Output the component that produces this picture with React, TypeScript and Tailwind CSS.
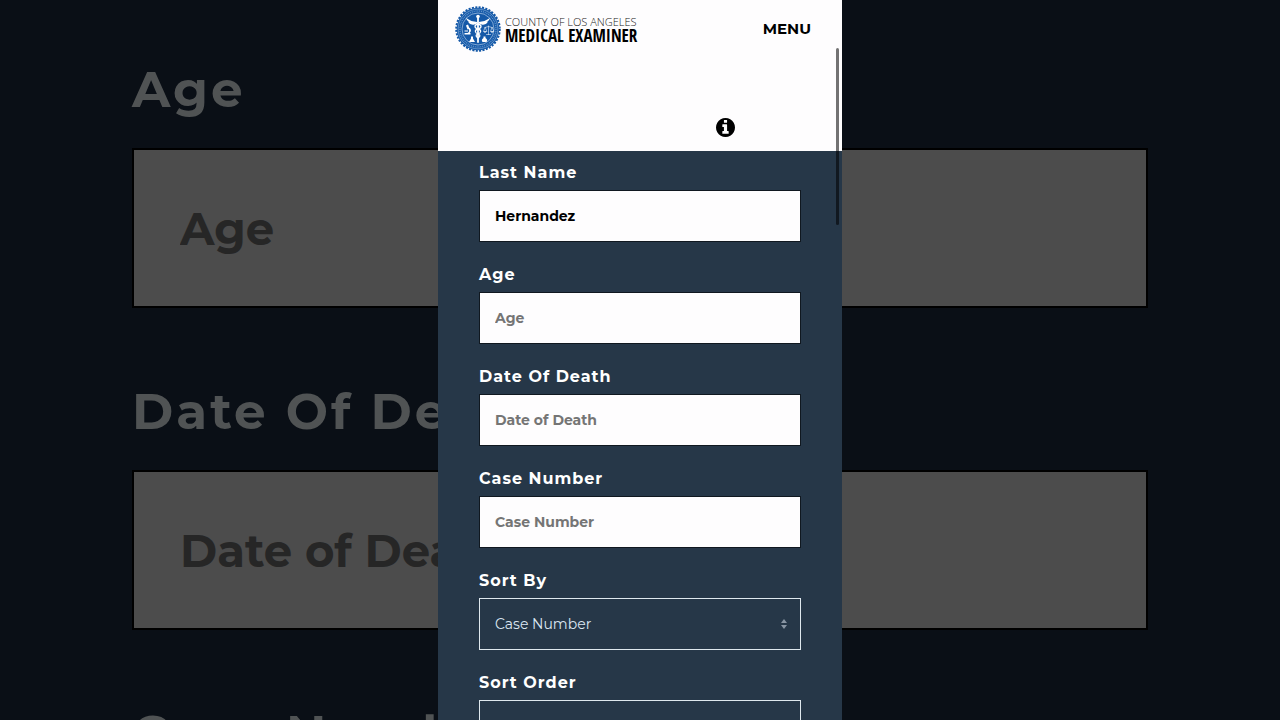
const backdropFields = [
  { id: "backdrop-age", label: "Age", placeholder: "Age" },
  { id: "backdrop-date", label: "Date Of Death", placeholder: "Date of Death" },
  { id: "backdrop-case", label: "Case Number", placeholder: "Case Number" },
];

const textFields = [
  { id: "last-name", label: "Last Name", placeholder: "Last Name", value: "Hernandez" },
  { id: "age", label: "Age", placeholder: "Age", value: "" },
  { id: "date-of-death", label: "Date Of Death", placeholder: "Date of Death", value: "" },
  { id: "case-number", label: "Case Number", placeholder: "Case Number", value: "" },
];

const selectFields = [
  { id: "sort-by", label: "Sort By", options: ["Case Number", "Last Name", "Date of Death"] },
  { id: "sort-order", label: "Sort Order", options: ["Ascending", "Descending"] },
];

function Seal() {
  return (
    <svg viewBox="0 0 92 92" className="size-[46px] shrink-0" aria-hidden="true">
      <circle cx="46" cy="46" r="42.5" fill="#1559a8" />
      <circle cx="46" cy="46" r="43.5" fill="none" stroke="#1559a8" strokeWidth="4" strokeDasharray="4.2 2.63" />
      <circle cx="46" cy="46" r="39.8" fill="none" stroke="#b9d2ee" strokeWidth="0.9" />
      <circle cx="46" cy="46" r="36" fill="none" stroke="#5f92cb" strokeWidth="2.8" strokeDasharray="2 1.8" />
      <circle cx="46" cy="46" r="32" fill="none" stroke="#c9dcf2" strokeWidth="1.2" />
      <g fill="none" stroke="#fff" strokeLinecap="round" strokeLinejoin="round">
        <path d="M46 23v49" strokeWidth="3.6" />
        <path
          d="M46 36c-8 2-8 8 0 10s6 8 0 10-4 6 0 8M46 36c8 2 8 8 0 10s-6 8 0 10 4 6 0 8"
          strokeWidth="2.6"
        />
        <path d="M67 40v17M60 43l7-2 7 2M60 43l-3 8h6zM74 43l-3 8h6zM63 57h8" strokeWidth="1.1" />
      </g>
      <g fill="#fff">
        <circle cx="46" cy="21" r="3.6" />
        <path d="M44 32c-7-1-15-2-22-9 1 5 4 8 7 9-1 0-2 0-3-1 2 4 5 6 8 6 4 1 7 0 10-2zM48 32c7-1 15-2 22-9-1 5-4 8-7 9 1 0 2 0 3-1-2 4-5 6-8 6-4 1-7 0-10-2z" />
        <path d="M57 51h6c-1 3-5 3-6 0zM71 51h6c-1 3-5 3-6 0z" />
        <path d="M22 39l4-2 3 8-4 2zM28 43c5 3 5 8 1 11h2v3H19v-3h6c4-2 4-5 2-8zM19 49h7v2h-7z" />
        <path d="M32 61h4v4l4 7H28l4-7zM57 61h4v3c4 2 4 6 2 8h-8c-2-2-2-6 2-8z" />
      </g>
    </svg>
  );
}

function InfoIcon() {
  return (
    <svg viewBox="128 128 1536 1536" className="size-[19px] fill-current" aria-hidden="true">
      <path d="M1152 1376v-160q0-14-9-23t-23-9h-96v-512q0-14-9-23t-23-9h-320q-14 0-23 9t-9 23v160q0 14 9 23t23 9h96v320h-96q-14 0-23 9t-9 23v160q0 14 9 23t23 9h448q14 0 23-9t9-23zm-128-896v-160q0-14-9-23t-23-9h-192q-14 0-23 9t-9 23v160q0 14 9 23t23 9h192q14 0 23-9t9-23zm640 416q0 209-103 385.5t-279.5 279.5-385.5 103-385.5-103-279.5-279.5-103-385.5 103-385.5 279.5-279.5 385.5-103 385.5 103 279.5 279.5 103 385.5z" />
    </svg>
  );
}

function Backdrop() {
  return (
    <div
      aria-hidden="true"
      className="absolute inset-0 flex flex-col gap-16 overflow-hidden px-[132px] pt-[50px]"
    >
      {backdropFields.map((field) => (
        <div key={field.id} className="flex shrink-0 flex-col gap-[18px]">
          <label htmlFor={field.id} className="text-[50px] leading-[80px] font-bold tracking-[3px] text-[#505354]">
            {field.label}
          </label>
          <input
            id={field.id}
            type="text"
            tabIndex={-1}
            placeholder={field.placeholder}
            className="h-[160px] w-full border-2 border-black bg-[#4c4c4c] px-[46px] text-[45px] font-bold placeholder:text-[#262626]"
          />
        </div>
      ))}
    </div>
  );
}

export default function App() {
  return (
    <div className="relative flex h-screen justify-center overflow-hidden bg-[#0a0f16] font-['Montserrat',sans-serif]">
      <Backdrop />
      <main className="relative flex w-full max-w-[404px] flex-col overflow-hidden bg-[#263748]">
        <header className="flex shrink-0 flex-col bg-[#fefdfe] pb-[14px]">
          <div className="flex h-[58px] items-center justify-between pr-[31px] pl-[17px]">
            <a href="#home" className="flex items-center gap-1">
              <Seal />
              <span className="flex flex-col whitespace-nowrap">
                <span className="font-['Open_Sans',sans-serif] text-[11px] leading-[13px] font-light text-[#222]">
                  COUNTY OF LOS ANGELES
                </span>
                <span className="font-['Open_Sans_Condensed','Noto_Sans_Condensed','Roboto_Condensed','Open_Sans',sans-serif] text-[17px] leading-[15px] font-bold text-black">
                  MEDICAL EXAMINER
                </span>
              </span>
            </a>
            <button type="button" className="text-[15px] font-bold text-black">
              MENU
            </button>
          </div>
          <div className="flex justify-end pt-[60px] pr-[107px]">
            <button type="button" aria-label="Search information" className="text-black">
              <InfoIcon />
            </button>
          </div>
        </header>

        <form className="flex flex-col gap-5 px-[41px] pt-[9px]">
          {textFields.map((field) => (
            <div key={field.id} className="flex shrink-0 flex-col gap-1">
              <label htmlFor={field.id} className="text-[16px] leading-[26px] font-bold tracking-[1px] text-white">
                {field.label}
              </label>
              <input
                id={field.id}
                type="text"
                defaultValue={field.value}
                placeholder={field.placeholder}
                className="h-[52px] w-full border border-[#101820] bg-[#fefdfe] px-[15px] text-[14px] font-bold text-black placeholder:text-[#757575]"
              />
            </div>
          ))}
          {selectFields.map((field) => (
            <div key={field.id} className="flex shrink-0 flex-col gap-1">
              <label htmlFor={field.id} className="text-[16px] leading-[26px] font-bold tracking-[1px] text-white">
                {field.label}
              </label>
              <div className="relative">
                <select
                  id={field.id}
                  className="h-[52px] w-full appearance-none border border-[#dfe8ee] bg-transparent px-[15px] text-[14px] text-[#dbe6f2]"
                >
                  {field.options.map((option) => (
                    <option key={option}>{option}</option>
                  ))}
                </select>
                <svg
                  viewBox="0 0 8 10"
                  className="pointer-events-none absolute top-[21px] right-[13px] h-[10px] w-2 fill-[#8995a3]"
                  aria-hidden="true"
                >
                  <path d="M4 0l3 4H1zM4 10l3-4H1z" />
                </svg>
              </div>
            </div>
          ))}
        </form>
        <div className="absolute top-12 right-[3px] h-[177px] w-[3px] rounded-full bg-black/55" />
      </main>
    </div>
  );
}
